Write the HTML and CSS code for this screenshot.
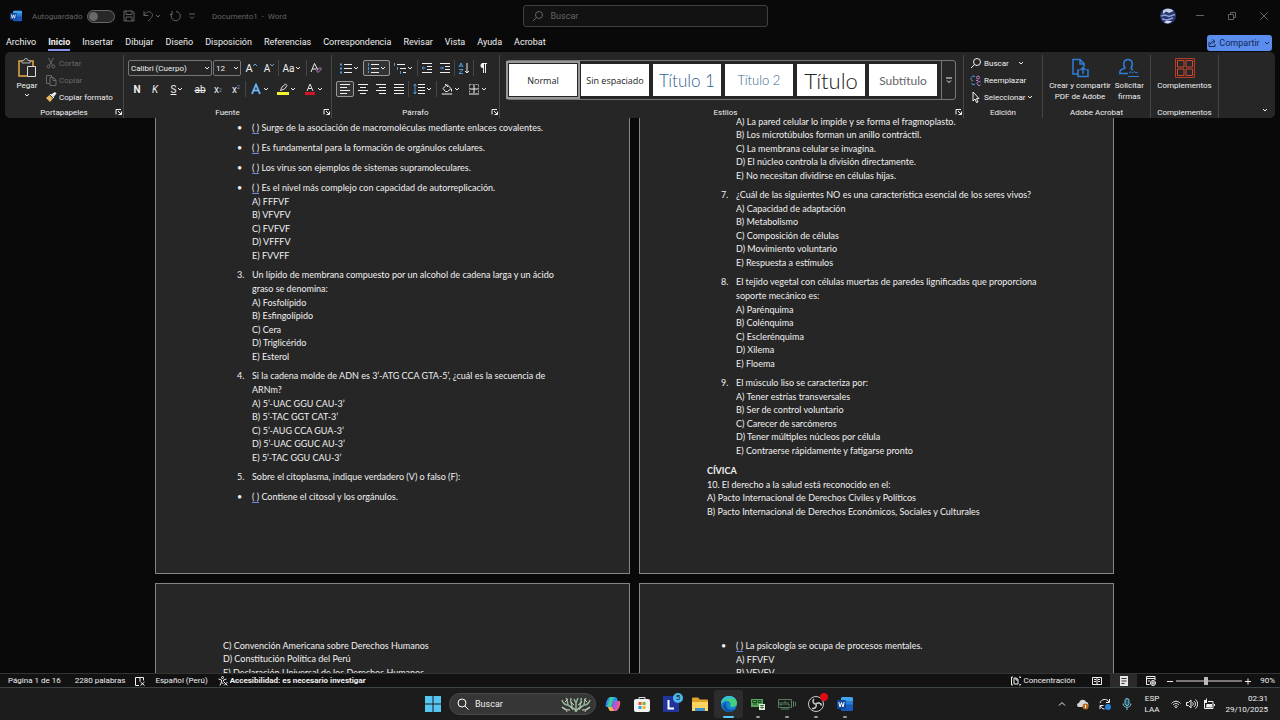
FILE: index.html
```html
<!DOCTYPE html>
<html lang="es">
<head>
  <meta charset="UTF-8">
  <title>Documento1 - Word</title>
  <link rel="stylesheet" href="styles.css">
</head>
<body>

  <!-- Iconos que se repiten -->
  <svg class="sprite" aria-hidden="true">
    <symbol id="flecha" viewBox="0 0 8 8"><path d="M2 3l2 2 2-2" fill="none" stroke="currentColor"/></symbol>
    <symbol id="lanzador" viewBox="0 0 8 8"><path d="M1 6.500V1.500h5M3 3l3.500 3.500M6.500 3.500v3h-3" fill="none" stroke="currentColor"/></symbol>
    <symbol id="lupa" viewBox="0 0 12 12"><circle cx="7" cy="5" r="3.500" fill="none" stroke="currentColor"/><path d="M4.500 7.500L1 11" stroke="currentColor"/></symbol>
    <symbol id="word" viewBox="0 0 16 16"><rect x="4" y="1" width="12" height="14" rx="1.500" fill="#185abd"/><path d="M5.500 1h9A1.500 1.500 0 0 1 16 2.500V5H4V2.500A1.500 1.500 0 0 1 5.500 1z" fill="#41a5ee"/><path d="M4 5h12v3.500H4z" fill="#2b7cd3"/><rect y="4" width="9" height="9" rx="1" fill="#1048a0"/><path d="M1.800 6l1.200 5 1.500-4.500L6 11l1.200-5" fill="none" stroke="#fff"/></symbol>
  </svg>

  <header class="titulo">
    <div class="titulo-izq">
      <svg class="i12" viewBox="0 0 16 16"><use href="#word"/></svg>
      <label class="auto" for="autoguardado">Autoguardado</label>
      <input type="checkbox" id="autoguardado" class="interruptor">
      <button class="btn-t" aria-label="Guardar"><svg class="i12" viewBox="0 0 12 12"><path d="M1 1h8.500L11 2.500V11H1zM3 1v3.500h6V1M3 11V7h6v4" fill="none" stroke="currentColor"/></svg></button>
      <button class="btn-t" aria-label="Deshacer"><svg class="i12" viewBox="0 0 12 12"><path d="M2 1v4.500h4.500M2 5.500C4 2 7 1 9 2.500c3 2.500 1 5-3 8.500" fill="none" stroke="currentColor"/></svg><svg class="i8"><use href="#flecha"/></svg></button>
      <button class="btn-t" aria-label="Repetir"><svg class="i12" viewBox="0 0 12 12"><path d="M3 1v3.500h-2M3 3.500A4.600 4.600 0 1 0 7 1.500" fill="none" stroke="currentColor"/></svg></button>
      <button class="btn-t" aria-label="Personalizar"><svg class="i8" viewBox="0 0 8 8"><path d="M1 2h6M2 4.500l2 2 2-2" fill="none" stroke="currentColor"/></svg></button>
      <span class="nombre">Documento1 &nbsp;- &nbsp;Word</span>
    </div>
    <div class="buscador">
      <svg class="i12"><use href="#lupa"/></svg>
      <input type="search" placeholder="Buscar" aria-label="Buscar">
    </div>
    <div class="titulo-der">
      <svg class="i16" viewBox="0 0 16 16"><circle cx="8" cy="8" r="8" fill="#27376f"/><path d="M3 2.500C6 0 11 0 13.500 3L9 5 6 3.500 3 6z" fill="#c8cfdf"/><path d="M1 8l4-1 4 1.500 6-2M2 11l5 1 6-2" fill="none" stroke="#8e9fd0" stroke-width="1.500"/><path d="M4 14c3-2 6-1 8-1-2 3-6 3-8 1z" fill="#d5daea"/></svg>
      <button class="btn-v" aria-label="Minimizar"><svg class="i8" viewBox="0 0 8 8"><path d="M0 3.500h8" stroke="currentColor"/></svg></button>
      <button class="btn-v" aria-label="Restaurar"><svg class="i8" viewBox="0 0 8 8"><path d="M.5 2.500h5v5h-5zM2.500 2.500v-2h5v5h-2" fill="none" stroke="currentColor"/></svg></button>
      <button class="btn-v" aria-label="Cerrar"><svg class="i8" viewBox="0 0 8 8"><path d="M.5.5l7 7M7.500.5l-7 7" stroke="currentColor"/></svg></button>
    </div>
  </header>

  <nav class="pestanas">
    <a href="#">Archivo</a>
    <a href="#" class="activa">Inicio</a>
    <a href="#">Insertar</a>
    <a href="#">Dibujar</a>
    <a href="#">Diseño</a>
    <a href="#">Disposición</a>
    <a href="#">Referencias</a>
    <a href="#">Correspondencia</a>
    <a href="#">Revisar</a>
    <a href="#">Vista</a>
    <a href="#">Ayuda</a>
    <a href="#">Acrobat</a>
    <button class="compartir"><svg class="i8" viewBox="0 0 8 8"><path d="M1 3v4.500h6V5M2.500 5.500c0-2 1-3 3-3M4.500.5l2.500 2-2.500 2" fill="none" stroke="currentColor"/></svg>Compartir<svg class="i8"><use href="#flecha"/></svg></button>
  </nav>

  <section class="cinta">
    <div class="grupo portapapeles">
      <div class="cuerpo">
        <button class="grande pegar">
          <svg class="i20" viewBox="0 0 20 20"><path d="M5 3H2v15h8M13 3h3v5" fill="none" stroke="#e5a946" stroke-width="1.500"/><path d="M5 5V2.500h2a2 2 0 0 1 4 0h2V5z" fill="#333" stroke="#aaa"/><path d="M10.500 8.500h8v10h-8z" fill="#262626" stroke="#ddd"/></svg>
          Pegar
          <svg class="i8"><use href="#flecha"/></svg>
        </button>
        <div class="pila">
          <button class="linea" disabled><svg class="i12" viewBox="0 0 12 12"><path d="M3.500 1l4 7.500M8.500 1l-4 7.500" stroke="currentColor"/><circle cx="3.500" cy="9.500" r="1.500" fill="none" stroke="currentColor"/><circle cx="8.500" cy="9.500" r="1.500" fill="none" stroke="currentColor"/></svg>Cortar</button>
          <button class="linea" disabled><svg class="i12" viewBox="0 0 12 12"><path d="M5 9.500H1.500v-8h5v2M5 3.500h3.500L11 6v5.500H5zM8 4v2.500h3" fill="none" stroke="currentColor"/></svg>Copiar</button>
          <button class="linea"><svg class="i12" viewBox="0 0 12 12"><path d="M6 3.500L8.500 6l3-3.500L10 1z" fill="#eee"/><path d="M4.500 4L8 7.500 5 11 1 7z" fill="#e8b65c"/><path d="M5 3l4 4" stroke="#fff"/></svg>Copiar formato</button>
        </div>
      </div>
      <div class="pie">Portapapeles<svg class="i8 lanzar"><use href="#lanzador"/></svg></div>
    </div>

    <div class="grupo fuente">
      <div class="filas">
        <div class="fila">
          <span class="combo letra"><select aria-label="Fuente"><option>Calibri (Cuerpo)</option></select><svg class="i8"><use href="#flecha"/></svg></span>
          <span class="combo"><select aria-label="Tamaño"><option>12</option></select><svg class="i8"><use href="#flecha"/></svg></span>
          <button class="h g" aria-label="Aumentar">A<svg class="i4" viewBox="0 0 4 4"><path d="M0 3l2-2 2 2" fill="none" stroke="#6aa9e0"/></svg></button>
          <button class="h" aria-label="Disminuir">A<svg class="i4" viewBox="0 0 4 4"><path d="M0 1l2 2 2-2" fill="none" stroke="#6aa9e0"/></svg></button>
          <i class="sep"></i>
          <button class="h d">Aa<svg class="i8"><use href="#flecha"/></svg></button>
          <i class="sep"></i>
          <button class="h g" aria-label="Borrar formato"><svg class="i12" viewBox="0 0 12 12"><path d="M1 10L4.500 1.500 8 8M2.500 7h4" fill="none" stroke="currentColor"/><path d="M6.500 9L10 5.500l1.500 1.500L8 10.500z" fill="#262626" stroke="#c580cf"/></svg></button>
        </div>
        <div class="fila">
          <button class="h"><b>N</b></button>
          <button class="h"><em>K</em></button>
          <button class="h d"><u>S</u><svg class="i8"><use href="#flecha"/></svg></button>
          <button class="h"><s>ab</s></button>
          <button class="h">x<small class="sub">2</small></button>
          <button class="h">x<small class="sup">2</small></button>
          <i class="sep"></i>
          <button class="h d" aria-label="Efectos"><svg class="i12" viewBox="0 0 12 12"><path d="M2 11L6 1.500 10 11M4 7.500h4" fill="none" stroke="#3f8fd6" stroke-width="2"/><path d="M2 11L6 1.500 10 11M4 7.500h4" fill="none" stroke="#b8dcf7" stroke-width=".6"/></svg><svg class="i8"><use href="#flecha"/></svg></button>
          <button class="h d" aria-label="Resaltado"><svg class="i12" viewBox="0 0 12 12"><path d="M0 9h12v3H0z" fill="#f3f331"/><path d="M3.500 7.500L5 4l3.500-3L10 2.500 7.500 6z" fill="none" stroke="#ddd"/></svg><svg class="i8"><use href="#flecha"/></svg></button>
          <button class="h d" aria-label="Color de fuente"><svg class="i12" viewBox="0 0 12 12"><path d="M1 9h10v3H1z" fill="#d41324"/><path d="M3 8l3-7 3 7M4 5.500h4" fill="none" stroke="#ddd"/></svg><svg class="i8"><use href="#flecha"/></svg></button>
        </div>
      </div>
      <div class="pie">Fuente<svg class="i8 lanzar"><use href="#lanzador"/></svg></div>
    </div>

    <div class="grupo parrafo">
      <div class="filas">
        <div class="fila">
          <button class="h d" aria-label="Viñetas"><svg class="i12" viewBox="0 0 12 12"><path d="M4 2.500h8M4 6.500h8M4 10.500h8" stroke="currentColor"/><path d="M0 2.500h2M0 6.500h2M0 10.500h2" stroke="#4c9be0" stroke-width="2"/></svg><svg class="i8"><use href="#flecha"/></svg></button>
          <button class="h d pulsado" aria-label="Numeración"><svg class="i12" viewBox="0 0 12 12"><path d="M4 2.500h8M4 6.500h8M4 10.500h8" stroke="currentColor"/><path d="M1.500 1v10" stroke="#4c9be0" stroke-dasharray="3 1"/></svg><svg class="i8"><use href="#flecha"/></svg></button>
          <button class="h d" aria-label="Lista multinivel"><svg class="i12" viewBox="0 0 12 12"><path d="M3 2.500h8M6 6.500h6M9 10.500h3" stroke="currentColor"/><path d="M.5 1v3M3.500 5v3M6.500 9v3" stroke="#4c9be0"/></svg><svg class="i8"><use href="#flecha"/></svg></button>
          <i class="sep"></i>
          <button class="h" aria-label="Disminuir sangría"><svg class="i12" viewBox="0 0 12 12"><path d="M1 1.500h10M6 4.500h5M6 7.500h5M1 10.500h10" stroke="currentColor"/><path d="M4.500 6H1m1.500-1.500L1 6l1.500 1.500" fill="none" stroke="#4c9be0"/></svg></button>
          <button class="h" aria-label="Aumentar sangría"><svg class="i12" viewBox="0 0 12 12"><path d="M1 1.500h10M6 4.500h5M6 7.500h5M1 10.500h10" stroke="currentColor"/><path d="M1 6h3.500M3 4.500L4.500 6 3 7.500" fill="none" stroke="#4c9be0"/></svg></button>
          <i class="sep"></i>
          <button class="h" aria-label="Ordenar"><svg class="i12" viewBox="0 0 12 12"><path d="M1 5l2-4 2 4M1.500 4h3M1 7.500h4l-4 4h4" fill="none" stroke="#4c9be0"/><path d="M9 1v10M7 9l2 2 2-2" fill="none" stroke="currentColor"/></svg></button>
          <i class="sep"></i>
          <button class="h" aria-label="Mostrar todo"><svg class="i12" viewBox="0 0 12 12"><path d="M6.500 2v9M8.500 2v9M10 1.500H5" fill="none" stroke="currentColor"/><path d="M6 1a2.500 2.500 0 0 0 0 5z" fill="currentColor"/></svg></button>
        </div>
        <div class="fila">
          <button class="h pulsado" aria-label="Izquierda"><svg class="i12" viewBox="0 0 12 12"><path d="M1 1.500h10M1 4.500h7M1 7.500h10M1 10.500h7" stroke="currentColor"/></svg></button>
          <button class="h" aria-label="Centrar"><svg class="i12" viewBox="0 0 12 12"><path d="M1 1.500h10M3 4.500h6M1 7.500h10M3 10.500h6" stroke="currentColor"/></svg></button>
          <button class="h" aria-label="Derecha"><svg class="i12" viewBox="0 0 12 12"><path d="M1 1.500h10M4 4.500h7M1 7.500h10M4 10.500h7" stroke="currentColor"/></svg></button>
          <button class="h" aria-label="Justificar"><svg class="i12" viewBox="0 0 12 12"><path d="M1 1.500h10M1 4.500h10M1 7.500h10M1 10.500h10" stroke="currentColor"/></svg></button>
          <i class="sep"></i>
          <button class="h d" aria-label="Interlineado"><svg class="i12" viewBox="0 0 12 12"><path d="M5 1.500h7M5 4.500h7M5 7.500h7M5 10.500h7" stroke="currentColor"/><path d="M2 1v10M.5 3L2 1l1.500 2M.5 9L2 11l1.500-2" fill="none" stroke="#4c9be0"/></svg><svg class="i8"><use href="#flecha"/></svg></button>
          <i class="sep"></i>
          <button class="h d" aria-label="Sombreado"><svg class="i12" viewBox="0 0 12 12"><path d="M2 5.500l4-4 4 4-3.500 3h-2zM4 1l3 3M10.500 6v2.500" fill="none" stroke="currentColor"/><path d="M1 10.500h10v1H1z" fill="none" stroke="#aaa" stroke-width=".8"/></svg><svg class="i8"><use href="#flecha"/></svg></button>
          <button class="h d" aria-label="Bordes"><svg class="i12" viewBox="0 0 12 12"><path d="M1.500 1.500h9v9M1.500 1.500v9" fill="none" stroke="#aaa" stroke-dasharray="2 1"/><path d="M6 2v8M2 6h8M1 11h10" stroke="currentColor"/></svg><svg class="i8"><use href="#flecha"/></svg></button>
        </div>
      </div>
      <div class="pie">Párrafo<svg class="i8 lanzar"><use href="#lanzador"/></svg></div>
    </div>

    <div class="grupo estilos">
      <div class="galeria">
        <button class="estilo elegido">Normal</button>
        <button class="estilo">Sin espaciado</button>
        <button class="estilo t1">Título 1</button>
        <button class="estilo t2">Título 2</button>
        <button class="estilo t0">Título</button>
        <button class="estilo subt">Subtítulo</button>
        <button class="mas" aria-label="Más estilos"><svg class="i8" viewBox="0 0 8 8"><path d="M1 2h6M2 4.500l2 2 2-2" fill="none" stroke="currentColor"/></svg></button>
      </div>
      <div class="pie">Estilos<svg class="i8 lanzar"><use href="#lanzador"/></svg></div>
    </div>

    <div class="grupo edicion">
      <div class="cuerpo">
        <div class="pila">
          <button class="linea"><svg class="i12"><use href="#lupa"/></svg>Buscar<svg class="i8 lejos"><use href="#flecha"/></svg></button>
          <button class="linea"><svg class="i12" viewBox="0 0 12 12"><path d="M5 2.500a2.500 2.500 0 1 0-2 4.500M1.500 9l1.500 2 2-1" fill="none" stroke="#4c9be0"/><circle cx="8" cy="3.500" r="1.500" fill="none" stroke="#c580cf"/><path d="M6 6.500h2M10.500 8a2 2 0 1 0 0 3" fill="none" stroke="#b983d0"/></svg>Reemplazar</button>
          <button class="linea"><svg class="i12" viewBox="0 0 12 12"><path d="M3 1v9l2-2 1.500 3.500L8 11 6.500 7.500H9z" fill="none" stroke="currentColor"/></svg>Seleccionar<svg class="i8 cerca"><use href="#flecha"/></svg></button>
        </div>
      </div>
      <div class="pie">Edición</div>
    </div>

    <div class="grupo acrobat">
      <div class="cuerpo">
        <button class="grande"><svg class="i20" viewBox="0 0 20 20"><path d="M8 16H3V1.500h7l4 4V9M10 2v4h4" fill="none" stroke="#2f7ed8" stroke-width="1.500"/><path d="M9.500 12H8v6.500h10V12h-1.500M13 16V9.500M10.500 12L13 9.500l2.500 2.500" fill="none" stroke="#2f7ed8" stroke-width="1.500"/></svg>Crear y compartir<br>PDF de Adobe</button>
        <button class="grande"><svg class="i20" viewBox="0 0 20 20"><path d="M1 15.500v-2.500c0-1.500 4-2 5-3C4 7 4 1.500 9 1.500S14 7 12 10c0 1 1 1.500 2 2M0 15.500h9" fill="none" stroke="#2f7ed8" stroke-width="1.500"/><path d="M9 18.500h11M10 15l2-1.500 1.500 1.500 2-1.500 1.500 1.500 2-1" fill="none" stroke="#2f7ed8"/></svg>Solicitar<br>firmas</button>
      </div>
      <div class="pie">Adobe Acrobat</div>
    </div>

    <div class="grupo complementos">
      <div class="cuerpo">
        <button class="grande"><svg class="i20" viewBox="0 0 20 20"><path d="M.5.5h19v19H.5z" fill="none" stroke="#b83b25"/><path d="M2.500 2.500h6.500v6.500H2.500zM11 2.500h6.500v6.500H11zM2.500 11h6.500v6.500H2.500zM11 11h6.500v6.500H11z" fill="none" stroke="#d6472e"/></svg>Complementos</button>
      </div>
      <div class="pie">Complementos</div>
    </div>
    <button class="plegar" aria-label="Contraer la cinta"><svg class="i8"><use href="#flecha"/></svg></button>
  </section>

  <main class="documento">
    <div class="hojas">
      <article class="hoja">
        <ul class="lista primera">
          <li><span class="marca">•</span><p><span class="error">( )</span> Surge de la asociación de macromoléculas mediante enlaces covalentes.</p></li>
          <li><span class="marca">•</span><p><span class="error">( )</span> Es fundamental para la formación de orgánulos celulares.</p></li>
          <li><span class="marca">•</span><p><span class="error">( )</span> Los virus son ejemplos de sistemas supramoleculares.</p></li>
          <li><span class="marca">•</span><p><span class="error">( )</span> Es el nivel más complejo con capacidad de autorreplicación.</p>
            <div class="opciones"><p>A) FFFVF</p><p>B) VFVFV</p><p>C) FVFVF</p><p>D) VFFFV</p><p>E) FVVFF</p></div></li>
          <li><span class="marca">3.</span><p>Un lípido de membrana compuesto por un alcohol de cadena larga y un ácido graso se denomina:</p>
            <div class="opciones"><p>A) Fosfolípido</p><p>B) Esfingolípido</p><p>C) Cera</p><p>D) Triglicérido</p><p>E) Esterol</p></div></li>
          <li><span class="marca">4.</span><p>Si la cadena molde de ADN es 3’-ATG CCA GTA-5’, ¿cuál es la secuencia de ARNm?</p>
            <div class="opciones"><p>A) 5’-UAC GGU CAU-3’</p><p>B) 5’-TAC GGT CAT-3’</p><p>C) 5’-AUG CCA GUA-3’</p><p>D) 5’-UAC GGUC AU-3’</p><p>E) 5’-TAC GGU CAU-3’</p></div></li>
          <li><span class="marca">5.</span><p>Sobre el citoplasma, indique verdadero (V) o falso (F):</p></li>
          <li><span class="marca">•</span><p><span class="error">( )</span> Contiene el citosol y los orgánulos.</p></li>
        </ul>
      </article>

      <article class="hoja">
        <ul class="lista">
          <li><div class="opciones"><p>A) La pared celular lo impide y se forma el fragmoplasto.</p><p>B) Los microtúbulos forman un anillo contráctil.</p><p>C) La membrana celular se invagina.</p><p>D) El núcleo controla la división directamente.</p><p>E) No necesitan dividirse en células hijas.</p></div></li>
          <li><span class="marca">7.</span><p>¿Cuál de las siguientes NO es una característica esencial de los seres vivos?</p>
            <div class="opciones"><p>A) Capacidad de adaptación</p><p>B) Metabolismo</p><p>C) Composición de células</p><p>D) Movimiento voluntario</p><p>E) Respuesta a estímulos</p></div></li>
          <li><span class="marca">8.</span><p>El tejido vegetal con células muertas de paredes lignificadas que proporciona soporte mecánico es:</p>
            <div class="opciones"><p>A) Parénquima</p><p>B) Colénquima</p><p>C) Esclerénquima</p><p>D) Xilema</p><p>E) Floema</p></div></li>
          <li><span class="marca">9.</span><p>El músculo liso se caracteriza por:</p>
            <div class="opciones"><p>A) Tener estrías transversales</p><p>B) Ser de control voluntario</p><p>C) Carecer de sarcómeros</p><p>D) Tener múltiples núcleos por célula</p><p>E) Contraerse rápidamente y fatigarse pronto</p></div></li>
        </ul>
        <h2>CÍVICA</h2>
        <div class="opciones"><p>10. El derecho a la salud está reconocido en el:</p><p>A) Pacto Internacional de Derechos Civiles y Políticos</p><p>B) Pacto Internacional de Derechos Económicos, Sociales y Culturales</p></div>
      </article>

      <article class="hoja siguiente">
        <div class="opciones"><p>C) Convención Americana sobre Derechos Humanos</p><p>D) Constitución Política del Perú</p><p>E) Declaración Universal de los Derechos Humanos</p></div>
      </article>

      <article class="hoja siguiente">
        <ul class="lista">
          <li><span class="marca">•</span><p><span class="error">( )</span> La psicología se ocupa de procesos mentales.</p>
            <div class="opciones"><p>A) FFVFV</p><p>B) VFVFV</p></div></li>
        </ul>
      </article>
    </div>
  </main>

  <footer class="estado">
    <span class="paginas">Página 1 de 16</span>
    <span>2280 palabras</span>
    <svg class="i10" viewBox="0 0 10 10"><path d="M4 9.500H.5v-8h8v3M5 1.500v4M5.500 6l4 3.500M9.500 6l-4 3.500" fill="none" stroke="currentColor"/></svg>
    <span>Español (Perú)</span>
    <strong><svg class="i10" viewBox="0 0 10 10"><circle cx="4.500" cy="1.500" r="1" fill="none" stroke="currentColor"/><path d="M.5 3l3 1v2L2 9.500M8.500 3l-3 1v1.500M4.500 6.500L5 8M6 6l3.500 3.500M9.500 6L6 9.500" fill="none" stroke="currentColor"/></svg>Accesibilidad: es necesario investigar</strong>
    <div class="vistas">
      <span class="concentracion"><svg class="i10" viewBox="0 0 10 10"><path d="M2 1H.5v8H2M8 1h1.500v1M9.500 8v1H8M3 2h2.500L7 3.500V8H3zM5 2v2h2" fill="none" stroke="currentColor"/></svg>Concentración</span>
      <button class="vista" aria-label="Lectura"><svg class="i10" viewBox="0 0 10 10"><path d="M.5 1.500h9v7h-9zM5 1v8M2 3.500h2M2 5.500h2M6 3.500h2M6 5.500h2" fill="none" stroke="currentColor"/></svg></button>
      <button class="vista actual" aria-label="Impresión"><svg class="i10" viewBox="0 0 10 10"><path d="M1 0h8v10H1z" fill="#e8e8e8"/><path d="M2.500 2.500h5M2.500 5h5M2.500 7.500h3" stroke="#333"/></svg></button>
      <button class="vista" aria-label="Web"><svg class="i10" viewBox="0 0 10 10"><path d="M9 4V.5H.5v8h3M1 2.500h8M2 5h2" fill="none" stroke="currentColor"/><circle cx="7" cy="7" r="2.500" fill="none" stroke="currentColor"/><path d="M4.500 7h5M7 4.500v5" stroke="currentColor"/></svg></button>
      <button class="zoom" aria-label="Alejar"><svg class="i8" viewBox="0 0 8 8"><path d="M1 4.500h6" stroke="currentColor"/></svg></button>
      <input type="range" class="escala" min="10" max="190" value="90" aria-label="Zoom">
      <button class="zoom" aria-label="Acercar"><svg class="i8" viewBox="0 0 8 8"><path d="M1 4.500h6M4 1.500v6" stroke="currentColor"/></svg></button>
      <span class="porcentaje">90%</span>
    </div>
  </footer>

  <footer class="tareas">
    <div class="apps">
      <button class="inicio" aria-label="Inicio"><svg class="i16" viewBox="0 0 16 16"><path d="M0 0h7.500v7.500H0zM8.500 0H16v7.500H8.500zM0 8.500h7.500V16H0zM8.500 8.500H16V16H8.500z" fill="#55c5f2"/></svg></button>
      <div class="buscar-win">
        <svg class="i12" viewBox="0 0 12 12"><circle cx="5" cy="5" r="4" fill="none" stroke="#fff"/><path d="M8 8l3.500 3.500" stroke="#fff"/></svg>
        <input type="search" placeholder="Buscar" aria-label="Buscar en Windows">
        <svg class="coral" viewBox="0 0 30 16"><path d="M15 16c-1-5-6-4-9-8M15 16c1-5 6-4 9-8M15 15V5M7 9C4 9 2 7 1 4M7 9c-1-3 0-5-2-7M11 11c0-4-2-5-1-9M23 9c3 0 5-2 6-5M23 9c1-3 0-5 2-7M19 11c0-4 2-5 1-9M15 7l-2-4M15 7l2-5M9 14c-3 0-6-1-8-3M21 14c3 0 6-1 8-3" fill="none" stroke="#91b49b" stroke-width="1.500"/><path d="M6 16c0-3-4-3-5-5M24 16c0-3 4-3 5-5M13 9l-3-3M17 9l4-3M12 14l-3-4M18 14l3-4M4 6l3-3M26 6l-3-3" fill="none" stroke="#d2c7ad"/></svg>
      </div>
      <button class="app" aria-label="Copilot"><svg class="i16" viewBox="0 0 16 16"><path d="M5 1h5c2 0 2 2 3 4H9L7 11H1C0 8 2 2 5 1z" fill="#2b8de8"/><path d="M3 8l2-7h4L6 11H2z" fill="#40c7a5"/><path d="M11 15H6c-2 0-2-2-3-4h4l2-6h6c1 3-1 9-4 10z" fill="#e85b83"/><path d="M9 5h4l-2 8c-1 2-3 2-4 0z" fill="#a959dc"/><path d="M3 11h4l2 4H6c-2 0-2-2-3-4z" fill="#f5b04b"/></svg></button>
      <button class="app" aria-label="Store"><svg class="i16" viewBox="0 0 16 16"><path d="M5 4V1.500h6V4" fill="none" stroke="#ddd"/><rect y="3" width="16" height="13" rx="2" fill="#f2f2f2"/><path d="M4.500 6h3v3h-3z" fill="#e9532c"/><path d="M8.500 6h3v3h-3z" fill="#78b51c"/><path d="M4.500 10h3v3h-3z" fill="#279fe8"/><path d="M8.500 10h3v3h-3z" fill="#f5b91c"/></svg></button>
      <button class="app" aria-label="L"><svg class="i16" viewBox="0 0 16 16"><path d="M0 0h16v16H0z" fill="#20349c"/><path d="M5.500 4v8.500h5.500" fill="none" stroke="#fff" stroke-width="2"/></svg><span class="aviso">5</span></button>
      <button class="app" aria-label="Explorador"><svg class="i16" viewBox="0 0 16 16"><path d="M0 2.500a1 1 0 0 1 1-1h5l2 2h7a1 1 0 0 1 1 1V14H0z" fill="#dca22a"/><path d="M0 6h16v9H0z" fill="#ffd461"/><path d="M3 12h10v3H3z" fill="#3b91d4"/></svg></button>
      <button class="app abierta frente" aria-label="Edge"><svg class="i16" viewBox="0 0 16 16"><circle cx="8" cy="8" r="8" fill="#1583d2"/><path d="M0 8C0 3 4 0 8 0s8 3 8 7c0 3-3 4-5 4-2 0-2-1-1.500-2C10 6 7 4 4 5 2 6 .5 7 0 8z" fill="#44d07f"/><path d="M0 8C0 3 4 0 8 0c3 0 5 1 6.500 3C10 2 6 2 4 4 2 5 .5 6 0 8z" fill="#35bde5"/><path d="M5 8c0 5 4 7 9 5-3 4-8 4-11 0-2-3-1-6 3-7-1 1-1 1.500-1 2z" fill="#0c56a8"/></svg></button>
      <button class="app abierta" aria-label="Tarjeta"><svg class="i14" viewBox="0 0 14 14"><path d="M0 2h12v8H0z" fill="#58a85a"/><path d="M1.500 3.500h4v2h-4zM7 3.500h3v2H7zM2 7h4" fill="none" stroke="#1b4a22"/><path d="M8 7h6v6H8z" fill="#e2eee0"/><path d="M9 8.500h4M9 10.500h4M11 8v4" stroke="#2d6a34" stroke-width=".8"/></svg></button>
      <button class="app abierta" aria-label="Monitor"><svg class="placa" viewBox="0 0 18 12"><path d="M.5 1.500h13v8H.5zM2 4v3h2V4M6 7V4h2v3M10 4v3h2M15.500 3v6M17.500 4v4M3 11h8" fill="none" stroke="#567e63"/></svg></button>
      <button class="app abierta" aria-label="OBS"><svg class="i16" viewBox="0 0 16 16"><circle cx="8" cy="8" r="7.500" fill="#171717" stroke="#ccc"/><path d="M8 8c-3 0-4-3-2-5M8 8c2-2 5-1 5.500 1.500M8 8c1 3-1 5-4 4.500" fill="none" stroke="#ccc" stroke-width="1.500"/></svg><span class="grabando"></span></button>
      <button class="app abierta" aria-label="Word"><svg class="i16"><use href="#word"/></svg></button>
    </div>
    <div class="bandeja">
      <svg class="i10" viewBox="0 0 10 10"><path d="M2 6.500l3-3 3 3" fill="none" stroke="currentColor"/></svg>
      <svg class="i12" viewBox="0 0 12 12"><path d="M2 9a2 2 0 0 1 0-4c1-4 6-4 7-1 2 0 3 2 2 5z" fill="#d7d7d7"/><circle cx="8.500" cy="8.500" r="3" fill="#b96a1e"/><path d="M8.500 7v3" stroke="#fff"/></svg>
      <svg class="i12" viewBox="0 0 12 12"><path d="M1 5c1-4 7-5 9-1M10.500 1v3.500H7M1 11V7.500h3.500M1.500 8c1 2 2 3 4 3" fill="none" stroke="currentColor"/><circle cx="9" cy="9" r="3" fill="#2584d8"/></svg>
      <svg class="i12" viewBox="0 0 12 12"><rect x="4" y=".5" width="4" height="7" rx="2" fill="#23566a" stroke="#79c7dd"/><path d="M2 5.500c0 5 8 5 8 0M6 9.500V12" fill="none" stroke="#79c7dd"/></svg>
      <span class="idioma">ESP<br>LAA</span>
      <div class="red">
        <svg class="i10" viewBox="0 0 10 10"><path d="M.5 4.500c2.500-3 6.500-3 9 0M2 6c2-2 4-2 6 0M3.500 7.500c1-1 2-1 3 0" fill="none" stroke="currentColor"/><circle cx="5" cy="8.500" r=".8" fill="currentColor"/></svg>
        <svg class="i12" viewBox="0 0 12 12"><path d="M.5 4.500h2L5 2v8L2.500 7.500h-2zM6.500 4.500c1 1 1 2 0 3M8 3c2 2 2 4 0 6M9.500 1.500c3 3 3 6 0 9" fill="none" stroke="currentColor"/></svg>
        <svg class="i12" viewBox="0 0 12 12"><path d="M1.500 4v6.500h8.500V3.500H5M11.500 6v2" fill="none" stroke="currentColor"/><path d="M3.500 6h5.500v3.500H3zM3 0v2H1v3h3V1z" fill="currentColor"/></svg>
      </div>
      <time class="reloj">02:31<br>29/10/2025</time>
    </div>
  </footer>

</body>
</html>
```
FILE: styles.css
```css
* {
  box-sizing: border-box;
}
body {
  margin: 0;
  height: 100vh;
  display: flex;
  flex-direction: column;
  overflow: hidden;
  background: #090909;
  color: #f0f0f0;
  font-family: Roboto, "Noto Sans", sans-serif;
  font-size: 8px;
}
button, input, select {
  font: inherit;
  color: inherit;
  background: none;
  border: none;
  padding: 0;
  margin: 0;
  min-width: 0;
}
p, h2, ul {
  margin: 0;
  padding: 0;
}
svg {
  display: block;
  flex: none;
}
.sprite {
  display: none;
}
.i4 { width: 4px; height: 4px; }
.i8 { width: 8px; height: 8px; }
.i10 { width: 10px; height: 10px; }
.i12 { width: 12px; height: 12px; }
.i14 { width: 14px; height: 14px; }
.i16 { width: 16px; height: 16px; }
.i20 { width: 20px; height: 20px; }

/* Barra de titulo */
.titulo {
  display: grid;
  grid-template-columns: 1fr 245px 1fr;
  align-items: center;
  height: 32px;
  padding-left: 10px;
  color: #646464;
}
.titulo-izq {
  display: flex;
  align-items: center;
}
.auto {
  width: 55px;
  margin-left: 10px;
}
.interruptor {
  appearance: none;
  width: 28px;
  height: 13px;
  margin-right: 8px;
  border: 1px solid #686868;
  border-radius: 7px;
  background: #282828;
}
.interruptor::before {
  content: "";
  display: block;
  width: 9px;
  height: 9px;
  margin: 1px;
  border-radius: 50%;
  background: #686868;
}
.btn-t {
  display: flex;
  align-items: center;
  margin-right: 7px;
}
.nombre {
  margin-left: 9px;
}
.buscador {
  display: flex;
  align-items: center;
  gap: 7px;
  height: 22px;
  padding-left: 8px;
  border: 1px solid #404040;
  border-radius: 3px;
  background: #121212;
}
.buscador input, .buscar-win input {
  flex: 1;
  outline: none;
  font-size: 9px;
}
input::placeholder {
  color: inherit;
  opacity: 1;
}
.titulo-der {
  display: flex;
  align-items: center;
  justify-content: flex-end;
}
.btn-v {
  display: flex;
  justify-content: center;
  width: 32px;
}
.titulo-der .i16 {
  margin-right: 8px;
}

/* Pestañas */
.pestanas {
  display: flex;
  align-items: center;
  gap: 12px;
  height: 20px;
  padding: 1px 8px 0 6px;
  font-size: 9px;
}
.pestanas a {
  color: #f0f0f0;
  text-decoration: none;
  line-height: 14px;
  border-bottom: 2px solid transparent;
}
.pestanas .activa {
  font-weight: bold;
  border-color: #8c90e8;
}
.compartir {
  display: flex;
  align-items: center;
  justify-content: center;
  gap: 3px;
  width: 65px;
  height: 16px;
  margin-left: auto;
  border-radius: 3px;
  background: #5b8def;
  color: #14294f;
}

/* Cinta de opciones */
.cinta {
  display: flex;
  flex: none;
  height: 66px;
  margin: 0 5px;
  padding-top: 3px;
  border-radius: 5px;
  background: #262626;
  line-height: 11px;
}
.grupo {
  display: flex;
  flex-direction: column;
  flex: none;
  border-right: 1px solid #464646;
}
.portapapeles { width: 119px; }
.fuente { width: 208px; }
.parrafo { width: 168px; }
.estilos { width: 464px; }
.edicion { width: 79px; }
.acrobat { width: 108px; }
.complementos { width: 68px; }
.cuerpo {
  display: flex;
  flex: 1;
  align-items: flex-start;
  justify-content: center;
  gap: 4px;
}
.portapapeles .cuerpo, .edicion .cuerpo {
  justify-content: flex-start;
  gap: 0;
}
.pie {
  display: flex;
  align-items: center;
  height: 12px;
  justify-content: center;
  position: relative;
}
.lanzar {
  position: absolute;
  right: 0;
  top: 2px;
}
.grande {
  display: block;
  padding-top: 3px;
  line-height: 11px;
  text-align: center;
  white-space: nowrap;
}
.grande svg {
  margin: 0 auto;
}
.grande .i20 {
  margin-bottom: 2px;
}
.pegar {
  width: 40px;
  padding-left: 4px;
}
.pila {
  display: flex;
  flex-direction: column;
  gap: 1px;
}
.linea {
  display: flex;
  align-items: center;
  gap: 2px;
  height: 16px;
}
.linea:disabled {
  color: #686868;
}
.edicion .pila {
  padding-left: 6px;
}
.linea .lejos {
  margin-left: 6px;
}
.linea .cerca {
  margin-left: -2px;
}
.filas {
  display: flex;
  flex-direction: column;
  flex: 1;
  gap: 5px;
  padding: 5px 0 0 4px;
}
.fila {
  display: flex;
  height: 16px;
}
.combo {
  position: relative;
  width: 28px;
  margin-right: 1px;
  border: 1px solid #777;
  border-radius: 2px;
}
.letra {
  width: 84px;
}
.combo select {
  appearance: none;
  width: 100%;
  height: 14px;
  padding-left: 2px;
}
.combo svg {
  position: absolute;
  right: 0;
  top: 3px;
}
.h {
  display: flex;
  align-items: center;
  justify-content: center;
  width: 18px;
  font-size: 10px;
  border: 1px solid transparent;
  border-radius: 2px;
}
.h.d {
  width: 27px;
}
.h.g {
  font-size: 11px;
}
.h .i4 {
  align-self: flex-start;
  margin-top: 2px;
}
.pulsado {
  border-color: #999;
  background: #333;
}
.sub, .sup {
  font-size: 5px;
  color: #6aa9e0;
}
.sub {
  align-self: flex-end;
}
.sup {
  align-self: flex-start;
}
.sep {
  width: 1px;
  background: #464646;
}
.galeria {
  display: flex;
  gap: 4px;
  width: 450px;
  height: 40px;
  margin: 5px 0 0 6px;
  padding-left: 2px;
  border: 1px solid #777;
  border-radius: 3px;
}
.estilos .pie {
  margin-top: auto;
  padding-right: 12px;
}
.estilo {
  width: 68px;
  height: 32px;
  margin-top: 3px;
  background: #fff;
  color: #222;
  font-family: "Open Sans", sans-serif;
  font-size: 9px;
  white-space: nowrap;
}
.elegido {
  outline: 2px solid #999;
  outline-offset: 1px;
}
.t1, .t2, .t0, .subt {
  font-family: Lato, sans-serif;
  font-weight: 300;
}
.t1 {
  font-size: 17px;
  color: #2f5f8f;
}
.t2 {
  font-size: 13px;
  color: #2f5f8f;
}
.t0 {
  font-size: 22px;
}
.subt {
  font-size: 12px;
  font-weight: 400;
  color: #666;
}
.mas {
  display: flex;
  align-items: center;
  justify-content: center;
  flex: 1;
  border-left: 1px solid #777;
}
.plegar {
  margin: auto 6px 4px auto;
}

/* Documento */
.documento {
  flex: 1;
  min-height: 0;
  overflow: hidden;
  padding-right: 11px;
  font-family: Lato, Carlito, sans-serif;
  font-size: 9px;
}
.hojas {
  display: grid;
  grid-template-columns: 475px 475px;
  justify-content: center;
  gap: 9px;
  margin-top: -3px;
}
.hoja {
  padding: 0 66px 55px 67px;
  border: 1px solid #858585;
  background: #262626;
  line-height: 14px;
}
.hoja:first-child, .hoja:nth-child(2) {
  border-top: none;
}
.siguiente {
  padding-top: 55px;
}
.lista {
  list-style: none;
}
.primera {
  padding-top: 6px;
}
.lista li {
  display: grid;
  grid-template-columns: 15px 1fr;
  padding-left: 14px;
  margin-bottom: 6px;
}
.lista li > p, .lista .opciones {
  grid-column: 2;
}
.opciones p {
  line-height: 13px;
}
.opciones p:nth-child(even) {
  line-height: 14px;
}
.error {
  border-bottom: 1px solid #6f86e8;
}
.hoja h2 {
  padding-top: 1px;
  font-size: 9px;
  line-height: 14px;
}

/* Barra de estado */
.estado {
  display: flex;
  align-items: center;
  gap: 10px;
  flex: none;
  height: 15px;
  padding: 0 5px 0 8px;
  border-top: 1px solid #333;
  border-bottom: 1px solid #3c4444;
  background: #121212;
}
.paginas {
  margin-right: 4px;
}
.estado strong, .concentracion {
  display: flex;
  align-items: center;
  gap: 2px;
}
.vistas {
  display: flex;
  align-items: center;
  margin-left: auto;
}
.concentracion {
  margin-right: 8px;
}
.vista {
  display: flex;
  align-items: center;
  justify-content: center;
  width: 27px;
  height: 13px;
}
.actual {
  background: #2a2a2a;
}
.zoom {
  margin: 0 2px;
}
.escala {
  appearance: none;
  width: 66px;
  height: 2px;
  background: #777;
}
.escala::-webkit-slider-thumb {
  appearance: none;
  width: 4px;
  height: 8px;
  background: #bbb;
}
.porcentaje {
  margin-left: 6px;
}

/* Barra de tareas */
.tareas {
  display: grid;
  grid-template-columns: 1fr auto 1fr;
  align-items: center;
  flex: none;
  height: 32px;
  padding: 0 12px 0 14px;
  background: #1c1c1c;
}
.apps {
  grid-column: 2;
  display: flex;
  align-items: center;
}
.inicio {
  width: 26px;
  padding-left: 2px;
}
.buscar-win {
  display: flex;
  align-items: center;
  gap: 6px;
  width: 147px;
  height: 22px;
  margin-right: 2px;
  padding: 0 4px 0 7px;
  border: 1px solid #4a4a4a;
  border-radius: 11px;
  background: #363636;
}
.coral {
  width: 30px;
  height: 16px;
}
.app {
  position: relative;
  display: flex;
  align-items: center;
  justify-content: center;
  width: 29px;
  height: 28px;
  border-radius: 3px;
}
.abierta::after {
  content: "";
  position: absolute;
  left: 13px;
  bottom: 0;
  width: 4px;
  height: 2px;
  border-radius: 1px;
  background: #999;
}
.frente {
  background: #2c2c2c;
}
.frente::after {
  left: 9px;
  width: 11px;
  background: #5ac8fa;
}
.placa {
  width: 18px;
  height: 12px;
}
.aviso, .grabando {
  position: absolute;
  top: 3px;
  right: 2px;
  width: 10px;
  height: 10px;
  border-radius: 50%;
  background: #4cb8ee;
  color: #111;
  line-height: 10px;
}
.grabando {
  width: 8px;
  height: 8px;
  background: #e00b12;
}
.bandeja {
  display: flex;
  align-items: center;
  justify-content: flex-end;
  gap: 10px;
  line-height: 11px;
  text-align: center;
}
.idioma {
  margin-left: 2px;
}
.red {
  display: flex;
  align-items: center;
  gap: 5px;
  margin-left: 2px;
}
.reloj {
  text-align: right;
}
```
